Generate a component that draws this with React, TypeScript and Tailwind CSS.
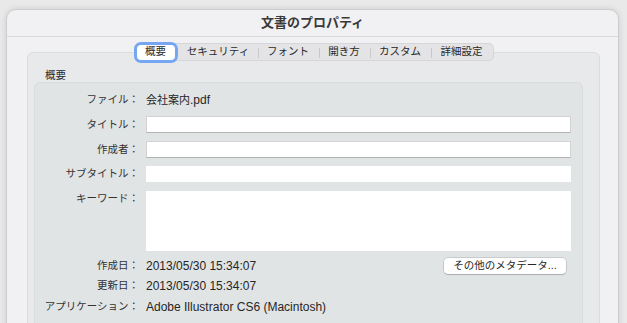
import React from "react";

const font = { fontFamily: '"Liberation Sans", "Noto Sans CJK JP", sans-serif' };

function Tabs() {
  const segs: { label: string; w: string; sep: boolean }[] = [
    { label: "セキュリティ", w: "w-[79px]", sep: false },
    { label: "フォント", w: "w-[61px]", sep: true },
    { label: "開き方", w: "w-[51px]", sep: true },
    { label: "カスタム", w: "w-[61px]", sep: true },
    { label: "詳細設定", w: "w-[62px]", sep: true },
  ];
  return (
    <div className="relative z-10 flex justify-center">
      <div className="flex h-[18px] items-center rounded-[5px] border border-[#d6d6d8] bg-[#e4e4e6] text-[10.5px] text-[#2a2a2a]">
        <div className="flex h-full w-[44px] items-center">
          <div className="ml-[2px] flex h-[15px] w-[38px] items-center justify-center rounded-[4px] bg-white shadow-[0_0_0_3px_#76a6f2]">
            概要
          </div>
        </div>
        {segs.map((s) => (
          <div key={s.label} className={`relative flex h-full items-center justify-center ${s.w}`}>
            {s.sep && <div className="absolute left-0 top-[4px] h-[10px] w-px bg-[#c9c9cb]" />}
            {s.label}
          </div>
        ))}
      </div>
    </div>
  );
}

function Label({ children, top }: { children: React.ReactNode; top?: boolean }) {
  return (
    <div className={`w-[104px] shrink-0 text-right text-[10.5px] text-[#333] ${top ? "self-start" : ""}`}>
      {children}
    </div>
  );
}

export default function App() {
  return (
    <div className="h-[323px] w-[627px] overflow-hidden bg-[#e9e9e9] pl-[6px] pr-[8px] pt-[9px]" style={font}>
      <div className="h-[330px] rounded-t-[10px] border border-[#cdcdcd] bg-[#f1f1f3] shadow-[0_0_6px_rgba(0,0,0,0.12)]">
        <div className="flex h-[27px] items-center justify-center border-b border-[#d8d8d8] text-[13px] font-bold text-[#3a3a3a]">
          文書のプロパティ
        </div>
        <div className="ml-[20px] mr-[18px] pt-[6px]">
          <Tabs />
          <div className="-mt-[9px] h-[300px] rounded-[6px] border border-[#dbdcdd] bg-[#e8e9ea]">
            <div className="pl-[17px] pt-[16px] text-[10.5px] leading-[13px] text-[#2a2a2a]">概要</div>
            <div className="ml-[6px] mr-[16px] h-[260px] rounded-[6px] border border-[#d9dbdc] bg-[#e1e4e5] pr-[11px] pt-[8px] text-[12px] text-[#262626]">
              <div className="flex h-[18px] items-center gap-[7px]">
                <Label>ファイル：</Label>
                <div>
                  <span className="text-[11px]">会社案内</span>.pdf
                </div>
              </div>
              <div className="mt-[7px] flex h-[17px] items-center gap-[7px]">
                <Label>タイトル：</Label>
                <div className="h-[17px] flex-1 border border-[#d2d2d2] border-b-[#b3b3b3] bg-white" />
              </div>
              <div className="mt-[8px] flex h-[17px] items-center gap-[7px]">
                <Label>作成者：</Label>
                <div className="h-[17px] flex-1 border border-[#d2d2d2] border-b-[#b3b3b3] bg-white" />
              </div>
              <div className="mt-[8px] flex h-[16px] items-center gap-[7px]">
                <Label>サブタイトル：</Label>
                <div className="h-[16px] flex-1 bg-white" />
              </div>
              <div className="mt-[9px] flex h-[60px] gap-[7px]">
                <Label top>
                  <div className="pt-[1px] leading-[13px]">キーワード：</div>
                </Label>
                <div className="h-[60px] flex-1 bg-white" />
              </div>
              <div className="mt-[6px] flex h-[18px] items-center gap-[7px]">
                <Label>作成日：</Label>
                <div className="flex-1">2013/05/30 15:34:07</div>
                <button className="mr-[5px] flex h-[16px] w-[122px] items-center justify-center rounded-[4px] bg-white text-[10.5px] text-[#262626] shadow-[0_0_0_0.5px_rgba(0,0,0,0.22),0_1px_1px_rgba(0,0,0,0.15)]">
                  その他のメタデータ...
                </button>
              </div>
              <div className="mt-[2px] flex h-[18px] items-center gap-[7px]">
                <Label>更新日：</Label>
                <div>2013/05/30 15:34:07</div>
              </div>
              <div className="mt-[3px] flex h-[18px] items-center gap-[7px]">
                <Label>アプリケーション：</Label>
                <div>Adobe Illustrator CS6 (Macintosh)</div>
              </div>
            </div>
          </div>
        </div>
      </div>
    </div>
  );
}
